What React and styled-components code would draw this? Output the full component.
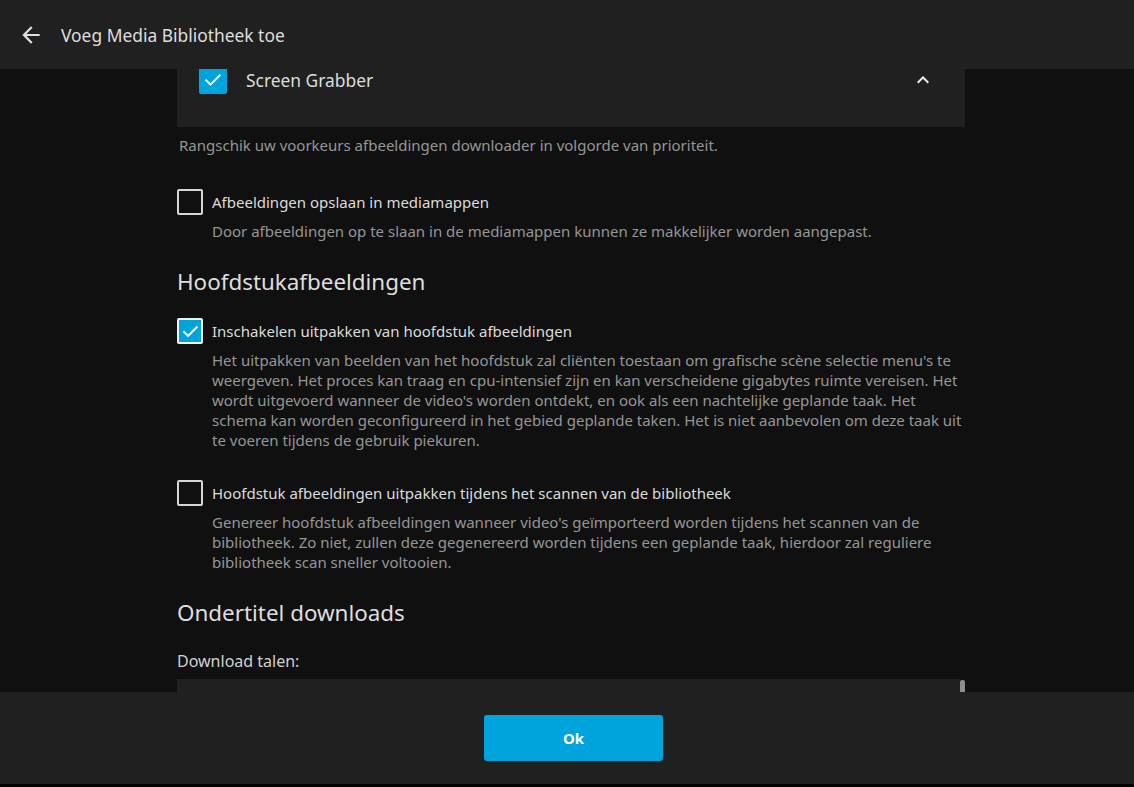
import { useLayoutEffect, useRef } from 'react';
import styled, { createGlobalStyle } from 'styled-components';

const GlobalStyle = createGlobalStyle`
  html, body {
    margin: 0;
    padding: 0;
    background: #000;
    font-family: "Noto Sans", "Open Sans", sans-serif;
    overflow: hidden;
  }
`;

const Dialog = styled.div`
  display: flex;
  flex-direction: column;
  height: 784px;
  background: #101010;
  color: rgba(255, 255, 255, 0.87);
`;

const Header = styled.div`
  display: flex;
  align-items: center;
  height: 69px;
  flex-shrink: 0;
  padding-left: 18px;
  background: #202020;
  position: relative;
  z-index: 1;
`;

const BackButton = styled.button`
  display: flex;
  align-items: center;
  justify-content: center;
  width: 26px;
  height: 26px;
  padding: 0;
  border: none;
  background: none;
  color: #e0e0e0;
  cursor: pointer;
`;

const Title = styled.h3`
  margin: 0 0 0 17px;
  font-size: 17.4px;
  line-height: 24px;
  font-weight: 400;
  color: #dedede;
`;

const ScrollArea = styled.div`
  flex: 1;
  overflow-y: auto;
  padding-left: 8px;
  scrollbar-width: none;
  &::-webkit-scrollbar {
    display: none;
  }
`;

const Column = styled.div`
  width: 788px;
  margin: 0 auto;
  padding-bottom: 40px;
`;

const PaperList = styled.div`
  background: #202020;
  padding: 8px 0 16px;
`;

const ListItem = styled.div`
  display: flex;
  align-items: center;
  height: 62px;
  padding: 0 30px 0 22px;
`;

const ItemBody = styled.div`
  flex: 1;
  margin-left: 19px;
  font-size: 17.4px;
  color: #dcdcdc;
`;

const IconButton = styled.button`
  display: flex;
  align-items: center;
  justify-content: center;
  width: 24px;
  height: 24px;
  padding: 0;
  border: none;
  background: none;
  color: #f0f0f0;
`;

const Box = styled.span`
  display: flex;
  align-items: center;
  justify-content: center;
  flex-shrink: 0;
  box-sizing: border-box;
  width: ${(p) => p.$size}px;
  height: ${(p) => p.$size}px;
  border-radius: 2px;
  border: 2px solid ${(p) => (p.$checked ? (p.$outlined ? '#f2f2f2' : '#00a4dc') : '#d6d6d6')};
  background: ${(p) => (p.$checked ? '#00a4dc' : 'transparent')};
`;

const Description = styled.div`
  font-size: 15px;
  line-height: 20px;
  color: #969696;
  margin-left: ${(p) => p.$indent || 0}px;
  margin-top: ${(p) => p.$top || 0}px;
`;

const CheckField = styled.div`
  margin-top: ${(p) => p.$top}px;
`;

const CheckRow = styled.label`
  display: flex;
  align-items: center;
  gap: 9px;
  font-size: 15px;
  color: #dcdcdc;
`;

const SectionTitle = styled.h2`
  margin: ${(p) => p.$top}px 0 0;
  font-size: 22.4px;
  line-height: 30px;
  font-weight: 400;
  color: #dedede;
`;

const FieldLabel = styled.div`
  margin-top: 22px;
  font-size: 16px;
  line-height: 22px;
  color: #d0d0d0;
`;

const ListFrame = styled.div`
  position: relative;
  margin-top: 7px;
  padding-right: 5px;
`;

const LanguageList = styled.div`
  height: 220px;
  overflow-y: auto;
  background: #202020;
  scrollbar-width: none;
  &::-webkit-scrollbar {
    display: none;
  }
`;

const ScrollThumb = styled.span`
  position: absolute;
  top: 1px;
  right: 0;
  width: 5px;
  height: 60px;
  border-radius: 2px;
  background: #8c8c8c;
`;

const Language = styled.div`
  padding: 8px 14px;
  font-size: 15px;
  color: #ddd;
`;

const Footer = styled.div`
  display: flex;
  justify-content: center;
  align-items: center;
  height: 92px;
  flex-shrink: 0;
  padding-left: 13px;
  background: #202020;
  position: relative;
  z-index: 1;
`;

const OkButton = styled.button`
  width: 179px;
  height: 46px;
  border: none;
  border-radius: 3px;
  background: #00a4dc;
  color: #fff;
  font-family: "Noto Sans", sans-serif;
  font-size: 15px;
  font-weight: 700;
  cursor: pointer;
`;

const Check = ({ size = 16 }) => (
  <svg width={size} height={size} viewBox="0 0 24 24" fill="none">
    <path d="M4 12.5l5 5L20 6.5" stroke="#fff" strokeWidth="2.4" strokeLinecap="square" />
  </svg>
);

const Chevron = ({ up }) => (
  <svg width="24" height="24" viewBox="0 0 24 24" fill="currentColor">
    <path d={up ? 'M7.41 15.41L12 10.83l4.59 4.58L18 14l-6-6-6 6z' : 'M7.41 8.59L12 13.17l4.59-4.58L18 10l-6 6-6-6z'} />
  </svg>
);

const Checkbox = ({ checked, label, top, children }) => (
  <CheckField $top={top}>
    <CheckRow>
      <Box $size={26} $checked={checked} $outlined>
        {checked && <Check size={19} />}
      </Box>
      {label}
    </CheckRow>
    <Description $indent={35} $top={6}>{children}</Description>
  </CheckField>
);

const fetchers = [
  { name: 'Embedded Image Extractor', checked: true, up: false },
  { name: 'Screen Grabber', checked: true, up: true },
];

const languages = ['Afrikaans', 'Albanees', 'Arabisch', 'Armeens', 'Baskisch', 'Bengaals', 'Bosnisch', 'Bulgaars'];

export default function App() {
  const scrollRef = useRef(null);

  useLayoutEffect(() => {
    if (scrollRef.current) scrollRef.current.scrollTop = 90;
  }, []);

  return (
    <>
      <GlobalStyle />
      <Dialog>
        <Header>
          <BackButton aria-label="Terug">
            <svg width="26" height="26" viewBox="0 0 24 24" fill="currentColor">
              <path d="M20 11H7.83l5.59-5.59L12 4l-8 8 8 8 1.41-1.41L7.83 13H20v-2z" />
            </svg>
          </BackButton>
          <Title>Voeg Media Bibliotheek toe</Title>
        </Header>
        <ScrollArea ref={scrollRef}>
          <Column>
            <PaperList>
              {fetchers.map((f) => (
                <ListItem key={f.name}>
                  <Box $size={28} $checked={f.checked}>
                    <Check size={20} />
                  </Box>
                  <ItemBody>{f.name}</ItemBody>
                  <IconButton><Chevron up={f.up} /></IconButton>
                </ListItem>
              ))}
            </PaperList>
            <Description $indent={2} $top={8}>
              Rangschik uw voorkeurs afbeeldingen downloader in volgorde van prioriteit.
            </Description>

            <Checkbox top={34} label="Afbeeldingen opslaan in mediamappen">
              Door afbeeldingen op te slaan in de mediamappen kunnen ze makkelijker worden aangepast.
            </Checkbox>

            <SectionTitle $top={26}>Hoofdstukafbeeldingen</SectionTitle>

            <Checkbox checked top={21} label="Inschakelen uitpakken van hoofdstuk afbeeldingen">
              Het uitpakken van beelden van het hoofdstuk zal cliënten toestaan om grafische scène selectie menu's te weergeven. Het proces kan traag en cpu-intensief zijn en kan verscheidene gigabytes ruimte vereisen. Het wordt uitgevoerd wanneer de video's worden ontdekt, en ook als een nachtelijke geplande taak. Het schema kan worden geconfigureerd in het gebied geplande taken. Het is niet aanbevolen om deze taak uit te voeren tijdens de gebruik piekuren.
            </Checkbox>

            <Checkbox top={30} label="Hoofdstuk afbeeldingen uitpakken tijdens het scannen van de bibliotheek">
              Genereer hoofdstuk afbeeldingen wanneer video's geïmporteerd worden tijdens het scannen van de bibliotheek. Zo niet, zullen deze gegenereerd worden tijdens een geplande taak, hierdoor zal reguliere bibliotheek scan sneller voltooien.
            </Checkbox>

            <SectionTitle $top={26}>Ondertitel downloads</SectionTitle>
            <FieldLabel>Download talen:</FieldLabel>
            <ListFrame>
              <LanguageList>
                {languages.map((l) => (
                  <Language key={l}>{l}</Language>
                ))}
              </LanguageList>
              <ScrollThumb />
            </ListFrame>
          </Column>
        </ScrollArea>
        <Footer>
          <OkButton>Ok</OkButton>
        </Footer>
      </Dialog>
    </>
  );
}
